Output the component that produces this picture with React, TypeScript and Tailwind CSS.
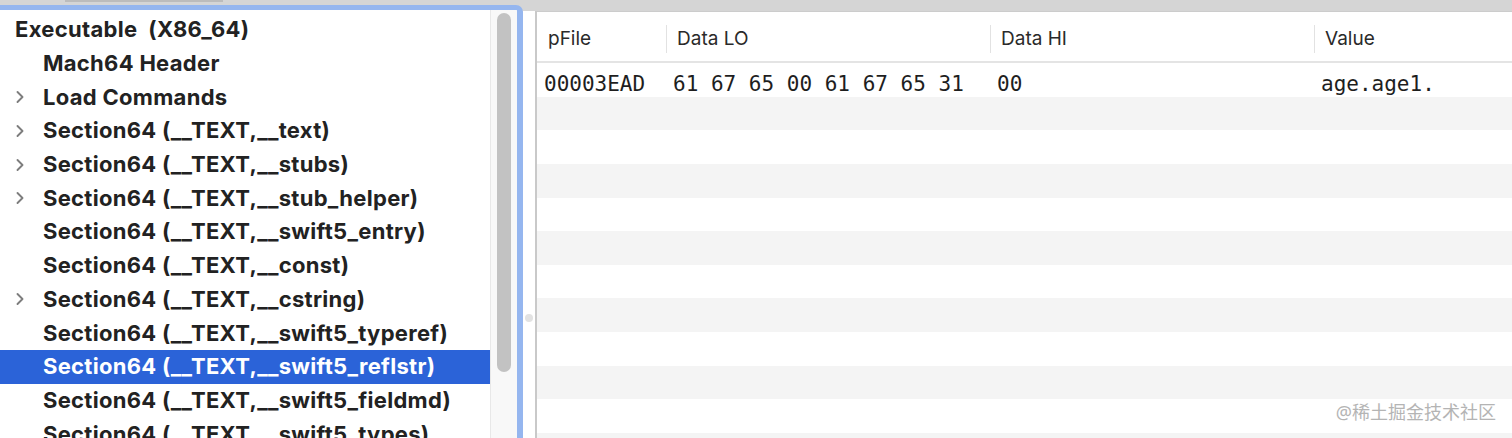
import React from "react";

type Node = { label: string; depth: number; chevron?: boolean; selected?: boolean };

const tree: Node[] = [
  { label: "Executable  (X86_64)", depth: 0 },
  { label: "Mach64 Header", depth: 1 },
  { label: "Load Commands", depth: 1, chevron: true },
  { label: "Section64 (__TEXT,__text)", depth: 1, chevron: true },
  { label: "Section64 (__TEXT,__stubs)", depth: 1, chevron: true },
  { label: "Section64 (__TEXT,__stub_helper)", depth: 1, chevron: true },
  { label: "Section64 (__TEXT,__swift5_entry)", depth: 1 },
  { label: "Section64 (__TEXT,__const)", depth: 1 },
  { label: "Section64 (__TEXT,__cstring)", depth: 1, chevron: true },
  { label: "Section64 (__TEXT,__swift5_typeref)", depth: 1 },
  { label: "Section64 (__TEXT,__swift5_reflstr)", depth: 1, selected: true },
  { label: "Section64 (__TEXT,__swift5_fieldmd)", depth: 1 },
  { label: "Section64 (__TEXT,__swift5_types)", depth: 1 },
];

const Chevron = () => (
  <svg width="10" height="13" viewBox="0 0 10 13" className="absolute left-[15px] top-1/2 -translate-y-1/2">
    <polyline points="2.5,1.5 7.5,6.5 2.5,11.5" fill="none" stroke="#7d7d7d" strokeWidth="1.9" strokeLinecap="round" strokeLinejoin="round" />
  </svg>
);

const TreeRow = ({ node }: { node: Node }) => (
  <div
    className={`relative flex h-[33.7px] shrink-0 items-center whitespace-pre text-[22px] font-bold tracking-[0.3px] ${
      node.selected ? "bg-[#2b63d8] text-white" : "text-[#222]"
    } ${node.depth === 0 ? "pl-[15px]" : "pl-[43px]"}`}
  >
    {node.chevron && <Chevron />}
    {node.label}
  </div>
);

const rows = [
  { file: "00003EAD", lo: "61 67 65 00 61 67 65 31", hi: "00", value: "age.age1." },
];

export default function App() {
  const stripes = Array.from({ length: 12 });
  return (
    <div
      className="relative flex h-[438px] w-[1512px] overflow-hidden bg-[#d5d5d5]"
      style={{ fontFamily: "Inter, 'Noto Sans', sans-serif" }}
    >
      <div className="absolute left-[65px] top-0 h-[2px] w-[158px] bg-[#bcbcbc]" />

      {/* outline panel */}
      <div className="mt-[5px] flex h-[433px] w-[523px] shrink-0 overflow-hidden rounded-tr-[7px] border-t-[5px] border-r-[6px] border-[#95b6ef] bg-white">
        <div className="flex flex-1 flex-col overflow-hidden pt-[3px]">
          {tree.map((n) => (
            <TreeRow key={n.label} node={n} />
          ))}
        </div>
        <div className="w-[27px] shrink-0 border-l border-[#e8e8e8] bg-[#f8f8f8] pl-[6px] pt-[3px]">
          <div className="h-[359px] w-[14px] rounded-full bg-[#c2c2c2]" />
        </div>
      </div>

      {/* splitter */}
      <div className="mt-[11px] flex w-[14px] shrink-0 justify-center border-r-2 border-[#c9c9c9] bg-white pt-[303px]">
        <div className="h-[8px] w-[8px] rounded-full bg-[#e2e2e2]" />
      </div>

      {/* data table */}
      <div className="mt-[11px] flex flex-1 flex-col border-t border-[#cccccc] bg-white">
        <div className="flex h-[51px] shrink-0 items-center border-b-2 border-[#e4e4e4] pt-[5px] text-[19px] text-[#2a2a2a]">
          <div className="w-[129px] pl-[11px]">pFile</div>
          <div className="flex h-[28px] w-[324px] items-center border-l border-[#e2e2e2] pl-[10px]">Data LO</div>
          <div className="flex h-[28px] w-[324px] items-center border-l border-[#e2e2e2] pl-[10px]">Data HI</div>
          <div className="flex h-[28px] flex-1 items-center border-l border-[#e2e2e2] pl-[10px]">Value</div>
        </div>
        <div
          className="flex flex-col text-[21px] text-[#1e1e1e]"
          style={{ fontFamily: "'DejaVu Sans Mono', 'Liberation Mono', monospace" }}
        >
          {stripes.map((_, i) => {
            const r = rows[i];
            return (
              <div
                key={i}
                className={`flex h-[33.65px] shrink-0 items-center whitespace-pre pt-[9px] ${
                  i % 2 === 1 ? "bg-[#f4f4f4]" : "bg-white"
                }`}
              >
                {r && (
                  <>
                    <div className="w-[129px] pl-[7px]">{r.file}</div>
                    <div className="w-[324px] pl-[7px]">{r.lo}</div>
                    <div className="w-[324px] pl-[7px]">{r.hi}</div>
                    <div className="flex-1 pl-[7px]">{r.value}</div>
                  </>
                )}
              </div>
            );
          })}
        </div>
      </div>

      <div
        className="absolute bottom-[12px] right-[16px] text-[18px] text-[#b4b4b4]"
        style={{ fontFamily: "'Noto Sans', 'Noto Sans CJK SC', sans-serif" }}
      >
        @稀土掘金技术社区
      </div>
    </div>
  );
}
